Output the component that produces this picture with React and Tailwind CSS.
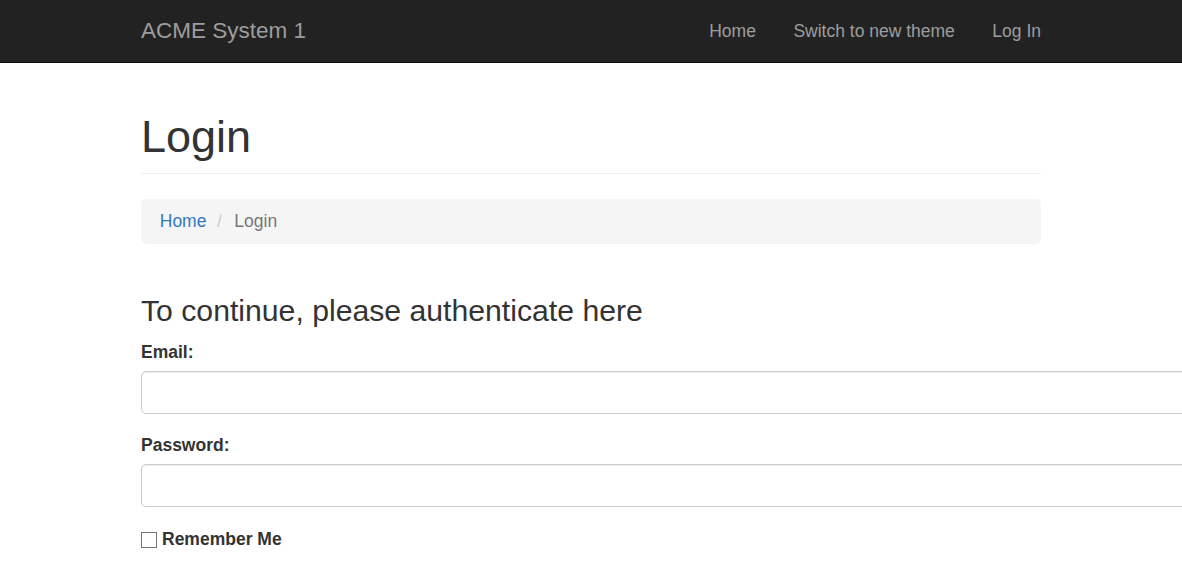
import React from "react";

export default function App() {
  const font = { fontFamily: '"Liberation Sans", Arial, Helvetica, sans-serif' };
  return (
    <div className="min-h-[567px] w-full overflow-hidden bg-white text-[#333]" style={font}>
      <nav className="h-[63px] border-b border-[#080808] bg-[#222]">
        <div className="mx-auto flex h-[62px] w-[900px] items-center justify-between">
          <a className="text-[22.5px] leading-[62px] text-[#9d9d9d]">ACME System 1</a>
          <ul className="mr-[-18.75px] flex">
            <li><a className="block px-[18.75px] text-[17.5px] leading-[62px] text-[#9d9d9d]">Home</a></li>
            <li><a className="block px-[18.75px] text-[17.5px] leading-[62px] text-[#9d9d9d]">Switch to new theme</a></li>
            <li><a className="block px-[18.75px] text-[17.5px] leading-[62px] text-[#9d9d9d]">Log In</a></li>
          </ul>
        </div>
      </nav>
      <div className="ml-[141px]">
        <div className="w-[900px]">
          <div className="mt-[49px] border-b border-[#eee] pb-[11px]">
            <h1 className="text-[45px] leading-[49.5px] font-normal">Login</h1>
          </div>
          <div className="mt-[25px] flex h-[45px] items-center rounded-[5px] bg-[#f5f5f5] px-[18.75px] pt-[1px] text-[17.5px]">
            <a className="text-[#337ab7]">Home</a>
            <span className="pl-[10.5px] pr-[12.5px] text-[#ccc]">/</span>
            <span className="text-[#777]">Login</span>
          </div>
          <h3 className="mt-[50px] text-[30.2px] leading-[33px] font-normal">To continue, please authenticate here</h3>
        </div>
        <form className="mt-[13px]">
          <div>
            <label className="block text-[17.5px] leading-[25px] font-bold">Email:</label>
            <input type="text" className="mt-[6px] block h-[43px] w-[1200px] rounded-[5px] border border-[#ccc] bg-white shadow-[inset_0_1px_1px_rgba(0,0,0,0.075)] outline-none" />
          </div>
          <div className="mt-[19.5px]">
            <label className="block text-[17.5px] leading-[25px] font-bold">Password:</label>
            <input type="password" className="mt-[6px] block h-[43px] w-[1200px] rounded-[5px] border border-[#ccc] bg-white shadow-[inset_0_1px_1px_rgba(0,0,0,0.075)] outline-none" />
          </div>
          <div className="mt-[20px] flex items-center">
            <span className="inline-block h-[16px] w-[16px] border border-[#767676] bg-white"></span>
            <span className="ml-[5px] text-[17.5px] leading-[25px] font-bold">Remember Me</span>
          </div>
        </form>
      </div>
    </div>
  );
}
